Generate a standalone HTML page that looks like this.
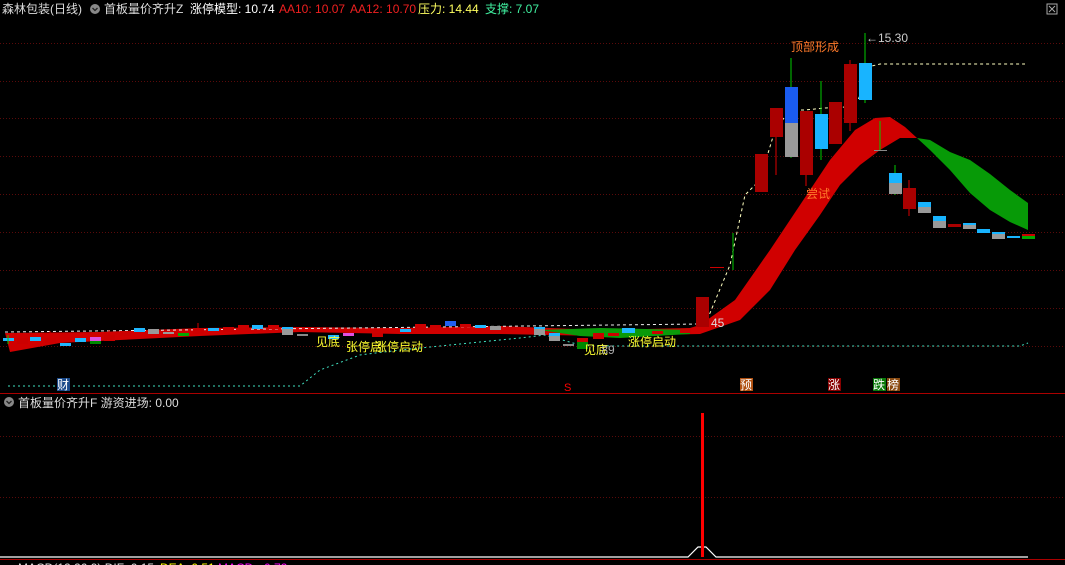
<!DOCTYPE html>
<html><head><meta charset="utf-8"><style>
html,body{margin:0;padding:0;background:#000;width:1065px;height:565px;overflow:hidden}
svg{display:block}
text{font-family:"Liberation Sans","Noto Sans CJK SC",sans-serif}
</style></head><body>
<svg width="1065" height="565" viewBox="0 0 1065 565" xmlns="http://www.w3.org/2000/svg">
<rect width="1065" height="565" fill="#000"/>
<g stroke="#5a0a0a" stroke-width="1" stroke-dasharray="1,2">
<line x1="0" y1="43.5" x2="1065" y2="43.5"/><line x1="0" y1="81.5" x2="1065" y2="81.5"/>
<line x1="0" y1="118.5" x2="1065" y2="118.5"/><line x1="0" y1="156.5" x2="1065" y2="156.5"/>
<line x1="0" y1="194.5" x2="1065" y2="194.5"/><line x1="0" y1="232.5" x2="1065" y2="232.5"/>
<line x1="0" y1="270.5" x2="1065" y2="270.5"/><line x1="0" y1="308.5" x2="1065" y2="308.5"/>
<line x1="0" y1="346.5" x2="1065" y2="346.5"/>
<line x1="0" y1="436.5" x2="1065" y2="436.5"/><line x1="0" y1="497.5" x2="1065" y2="497.5"/>
</g>
<line x1="0" y1="393.5" x2="1065" y2="393.5" stroke="#a00" stroke-width="1"/>
<line x1="0" y1="559.5" x2="1065" y2="559.5" stroke="#a00" stroke-width="1"/>

<path d="M5,333 L100,332 L200,328 L300,327 L400,328 L500,326 L600,330 L690,328 L700,325 L735,300 L770,250 L800,205 L830,160 L855,130 L875,118 L890,117 L905,127 L917,138 L900,138 L880,150 L860,165 L840,185 L820,215 L795,250 L770,290 L740,320 L700,334 L600,336 L500,334 L400,334 L300,332 L200,336 L120,340 L60,343 L10,352 Z" fill="#d00000"/>
<path d="M540,330 L600,328 L690,330 L690,334 L620,338 L580,336 Z" fill="#0a9a0a"/>
<path d="M917,138 L930,140 L950,152 L970,160 L990,174 L1010,190 L1028,203 L1028,230 L1010,222 L990,210 L970,193 L950,170 L930,150 Z" fill="#079a07"/>

<polyline points="5,332 700,324" fill="none" stroke="#eee" stroke-width="1" stroke-dasharray="3,3"/>
<polyline points="705,325 730,265 745,195 760,180 775,130 790,110 805,110 825,108 845,107 858,100 872,66 880,64 1025,64" fill="none" stroke="#ffffc0" stroke-width="1" stroke-dasharray="3,3"/>
<polyline points="8,386 300,386 320,370 360,355 400,350 450,345 520,338 545,335 580,345 600,346 1020,346 1028,343" fill="none" stroke="#40e0c0" stroke-width="1" stroke-dasharray="2,3"/>

<g>
<rect x="3" y="338" width="11" height="3" fill="#20b8ff"/><line x1="8" y1="335" x2="8" y2="344" stroke="#0c0"/>
<rect x="17" y="338" width="11" height="6" fill="#c00"/>
<rect x="30" y="337" width="11" height="4" fill="#20b8ff"/>
<rect x="45" y="338" width="11" height="5" fill="#c00"/><line x1="50" y1="331" x2="50" y2="338" stroke="#c00"/>
<rect x="60" y="343" width="11" height="3" fill="#20b8ff"/>
<rect x="75" y="338" width="11" height="4" fill="#20b8ff"/>
<rect x="90" y="337" width="11" height="4" fill="#e050e0"/><rect x="90" y="341" width="11" height="3" fill="#080"/>
<rect x="104" y="335" width="11" height="6" fill="#c00"/><line x1="109" y1="330" x2="109" y2="335" stroke="#c00"/>
<rect x="120" y="331" width="11" height="5" fill="#c00"/>
<rect x="134" y="328" width="11" height="4" fill="#20b8ff"/>
<rect x="148" y="329" width="11" height="5" fill="#999"/>
<rect x="163" y="332" width="11" height="2" fill="#999"/>
<rect x="178" y="333" width="11" height="3" fill="#0a0"/>
<rect x="193" y="328" width="11" height="6" fill="#c00"/><line x1="198" y1="323" x2="198" y2="328" stroke="#c00"/>
<rect x="208" y="328" width="11" height="3" fill="#20b8ff"/>
<rect x="223" y="327" width="11" height="5" fill="#c00"/>
<rect x="238" y="325" width="11" height="5" fill="#c00"/>
<rect x="252" y="325" width="11" height="4" fill="#20b8ff"/>
<rect x="268" y="325" width="11" height="4" fill="#c00"/>
<rect x="282" y="329" width="11" height="6" fill="#999"/><rect x="282" y="327" width="11" height="2" fill="#20b8ff"/>
<rect x="297" y="334" width="11" height="2" fill="#888"/>
<rect x="328" y="335" width="11" height="4" fill="#20b8ff"/>
<rect x="343" y="333" width="11" height="3" fill="#e050e0"/>
<rect x="372" y="333" width="11" height="4" fill="#c00"/>
<rect x="400" y="329" width="11" height="3" fill="#20b8ff"/>
<rect x="415" y="324" width="11" height="6" fill="#c00"/>
<rect x="430" y="325" width="11" height="3" fill="#c00"/>
<rect x="445" y="321" width="11" height="5" fill="#2060f0"/>
<rect x="460" y="324" width="11" height="3" fill="#c00"/>
<rect x="475" y="325" width="11" height="3" fill="#20b8ff"/>
<rect x="490" y="326" width="11" height="4" fill="#999"/>
<rect x="505" y="327" width="11" height="3" fill="#c00"/>
<rect x="534" y="328" width="11" height="7" fill="#999"/><rect x="534" y="327" width="11" height="2" fill="#20b8ff"/>
<rect x="549" y="334" width="11" height="7" fill="#999"/><rect x="549" y="333" width="11" height="3" fill="#20b8ff"/>
<rect x="563" y="344" width="11" height="2" fill="#888"/>
<rect x="577" y="340" width="11" height="9" fill="#080"/><rect x="577" y="338" width="11" height="4" fill="#c00"/>
<rect x="593" y="333" width="11" height="6" fill="#c00"/>
<rect x="608" y="333" width="11" height="3" fill="#c00"/>
<rect x="622" y="328" width="13" height="5" fill="#20b8ff"/>
<rect x="652" y="331" width="11" height="3" fill="#c00"/>
<rect x="680" y="330" width="11" height="3" fill="#c00"/>
</g>

<g>
<line x1="710" y1="267.5" x2="724" y2="267.5" stroke="#c00"/>
<line x1="733" y1="233" x2="733" y2="270" stroke="#0c0"/>
<rect x="696" y="297" width="13" height="30" fill="#a00"/>
<rect x="755" y="154" width="13" height="38" fill="#a00"/>
<line x1="776" y1="137" x2="776" y2="175" stroke="#d00"/>
<rect x="770" y="108" width="13" height="29" fill="#a00"/>
<line x1="791" y1="58" x2="791" y2="158" stroke="#0c0"/>
<rect x="785" y="87" width="13" height="36" fill="#1a5cf0"/><rect x="785" y="123" width="13" height="34" fill="#9a9a9a"/>
<line x1="806" y1="111" x2="806" y2="186" stroke="#d00"/>
<rect x="800" y="111" width="13" height="64" fill="#a00"/>
<line x1="821" y1="81" x2="821" y2="160" stroke="#0c0"/>
<rect x="815" y="114" width="13" height="35" fill="#18b4ff"/>
<rect x="829" y="102" width="13" height="42" fill="#a00"/>
<line x1="850" y1="60" x2="850" y2="131" stroke="#d00"/>
<rect x="844" y="64" width="13" height="59" fill="#a00"/>
<line x1="865" y1="33" x2="865" y2="103" stroke="#0c0"/>
<rect x="859" y="63" width="13" height="37" fill="#18b4ff"/>
<line x1="880" y1="121" x2="880" y2="150" stroke="#0c0"/><line x1="874" y1="150.5" x2="887" y2="150.5" stroke="#888"/>
<line x1="895" y1="165" x2="895" y2="195" stroke="#0c0"/>
<rect x="889" y="173" width="13" height="10" fill="#18b4ff"/><rect x="889" y="183" width="13" height="11" fill="#999"/>
<line x1="909" y1="180" x2="909" y2="216" stroke="#d00"/>
<rect x="903" y="188" width="13" height="21" fill="#a00"/>
<rect x="918" y="202" width="13" height="5" fill="#18b4ff"/><rect x="918" y="207" width="13" height="6" fill="#999"/>
<rect x="933" y="216" width="13" height="5" fill="#18b4ff"/><rect x="933" y="221" width="13" height="7" fill="#999"/>
<rect x="948" y="224" width="13" height="3" fill="#a00"/>
<rect x="963" y="223" width="13" height="6" fill="#999"/><rect x="963" y="223" width="13" height="2" fill="#18b4ff"/>
<rect x="977" y="229" width="13" height="4" fill="#18b4ff"/>
<rect x="992" y="232" width="13" height="7" fill="#999"/><rect x="992" y="232" width="13" height="2" fill="#18b4ff"/>
<rect x="1007" y="236" width="13" height="2" fill="#18b4ff"/>
<rect x="1022" y="234" width="13" height="5" fill="#0a0"/><rect x="1022" y="234" width="13" height="2" fill="#c00"/>
</g>

<g font-size="12">
<text x="791" y="51" fill="#ff7a2a">顶部形成</text>
<text x="866" y="42" fill="#ccc">←15.30</text>
<text x="806" y="198" fill="#ff7a2a">尝试</text>
<text x="711" y="327" fill="#ddd">45</text>
<text x="316" y="346" fill="#ffff30">见底</text>
<text x="346" y="351" fill="#ffff30">张停启</text>
<text x="375" y="351" fill="#ffff30">涨停启动</text>
<text x="584" y="354" fill="#ffff30">见底</text>
<text x="598" y="354" fill="#aaa">.89</text>
<text x="628" y="346" fill="#ffff30">涨停启动</text>
</g>
<rect x="57" y="378" width="13" height="13" fill="#1a4a8a"/><text x="57" y="389" font-size="12" fill="#fff">财</text>
<text x="564" y="391" font-size="11" fill="#f00">S</text>
<rect x="740" y="378" width="13" height="13" fill="#b05010"/><text x="740" y="389" font-size="12" fill="#fff">预</text>
<rect x="828" y="378" width="13" height="13" fill="#800"/><text x="828" y="389" font-size="12" fill="#fff">涨</text>
<rect x="873" y="378" width="13" height="13" fill="#0a7a0a"/><text x="873" y="389" font-size="12" fill="#fff">跌</text>
<rect x="887" y="378" width="13" height="13" fill="#8a4a10"/><text x="887" y="389" font-size="12" fill="#fff">榜</text>

<polyline points="0,557 688,557 698,547 706,547 716,557 1028,557" fill="none" stroke="#fff" stroke-width="1.2"/>
<rect x="701" y="413" width="3" height="144" fill="#f00"/>

<g font-size="12">
<text x="2" y="13" fill="#ddd">森林包装(日线)</text>
<circle cx="95" cy="9" r="5" fill="#888"/><path d="M92.5,8 L95,10.5 L97.5,8" stroke="#222" stroke-width="1.3" fill="none"/>
<text x="104" y="13" fill="#ddd">首板量价齐升Z</text>
<text x="190" y="13" fill="#fff">涨停模型: 10.74</text>
<text x="279" y="13" fill="#f02020">AA10: 10.07</text>
<text x="350" y="13" fill="#f02020">AA12: 10.70</text>
<text x="418" y="13" fill="#ffff60">压力: 14.44</text>
<text x="485" y="13" fill="#40f0a0">支撑: 7.07</text>
<circle cx="9" cy="402" r="5" fill="#888"/><path d="M6.5,401 L9,403.5 L11.5,401" stroke="#222" stroke-width="1.3" fill="none"/>
<text x="18" y="407" fill="#ddd">首板量价齐升F  游资进场: 0.00</text>
<text x="18" y="572" fill="#ddd">MACD(12,26,9)  DIF: 0.15</text>
<text x="160" y="572" fill="#ff0">DEA: 0.51</text>
<text x="218" y="572" fill="#f0f">MACD: -0.72</text>
</g>
<rect x="1047" y="4" width="10" height="10" fill="none" stroke="#aaa"/><path d="M1049,6 L1055,12 M1055,6 L1049,12" stroke="#aaa"/>
</svg>
</body></html>
